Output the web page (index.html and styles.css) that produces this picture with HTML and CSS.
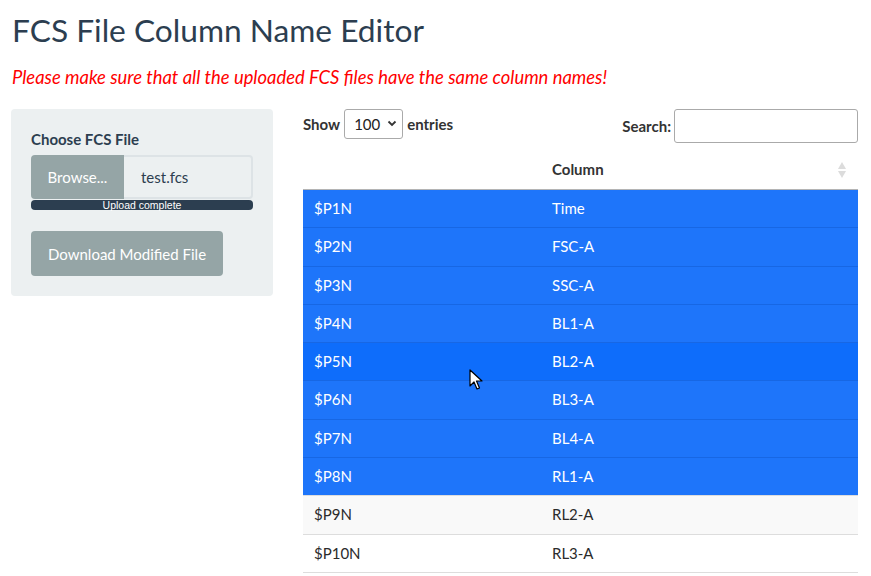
FILE: index.html
```html
<!DOCTYPE html>
<html lang="en">
<head>
<meta charset="utf-8">
<title>FCS File Column Name Editor</title>
<link rel="stylesheet" href="styles.css">
</head>
<body>
<div class="page">
  <h2 class="title">FCS File Column Name Editor</h2>
  <p class="warning">Please make sure that all the uploaded FCS files have the same column names!</p>
  <div class="layout">
    <aside class="well">
      <label class="label">Choose FCS File</label>
      <div class="file-group">
        <span class="browse">Browse...</span>
        <span class="file-name">test.fcs</span>
      </div>
      <div class="progress">Upload complete</div>
      <button class="download">Download Modified File</button>
    </aside>
    <main class="main">
      <div class="controls">
        <div class="length">Show
          <span class="select">100
            <svg class="chev" width="10" height="7" viewBox="0 0 10 7"><path d="M1.5 1.5 L5 5 L8.5 1.5" fill="none" stroke="#333" stroke-width="1.8"/></svg>
          </span>
          entries</div>
        <div class="search">Search: <span class="search-input"></span></div>
      </div>
      <table class="table">
        <thead>
          <tr>
            <th class="c1"></th>
            <th class="c2">Column
              <svg class="sort" width="10" height="18" viewBox="0 0 10 18"><path d="M5 1 L9 8 L1 8 Z" fill="#dcdcdc"/><path d="M1 10 L9 10 L5 17 Z" fill="#dcdcdc"/></svg>
            </th>
          </tr>
        </thead>
        <tbody>
          <tr class="sel"><td>$P1N</td><td>Time</td></tr>
          <tr class="sel"><td>$P2N</td><td>FSC-A</td></tr>
          <tr class="sel"><td>$P3N</td><td>SSC-A</td></tr>
          <tr class="sel"><td>$P4N</td><td>BL1-A</td></tr>
          <tr class="sel hover"><td>$P5N</td><td>BL2-A</td></tr>
          <tr class="sel"><td>$P6N</td><td>BL3-A</td></tr>
          <tr class="sel"><td>$P7N</td><td>BL4-A</td></tr>
          <tr class="sel"><td>$P8N</td><td>RL1-A</td></tr>
          <tr class="odd"><td>$P9N</td><td>RL2-A</td></tr>
          <tr class="even"><td>$P10N</td><td>RL3-A</td></tr>
        </tbody>
      </table>
    </main>
  </div>
  <svg class="cursor" width="14" height="22" viewBox="0 0 14 22"><path d="M1 1 L1 17 L5 13 L8 20 L10.5 19 L7.5 12 L13 12 Z" fill="#fff" stroke="#000" stroke-width="1.2" stroke-linejoin="round"/></svg>
</div>
</body>
</html>
```

FILE: styles.css
```css
html, body {
  margin: 0;
  padding: 0;
  overflow: hidden;
  background: #fff;
}
body {
  font-family: Lato, "Open Sans", sans-serif;
  font-size: 15px;
  line-height: 1.5;
  color: #212529;
}
.page {
  position: relative;
  padding: 0 13px 0 11px;
}
.title {
  margin: 0;
  padding-top: 11px;
  padding-left: 1px;
  font-size: 31.7px;
  font-weight: 400;
  line-height: 1.2;
  color: #2c3e50;
}
.warning {
  margin: 17px 0 0 1px;
  font-size: 18.4px;
  font-style: italic;
  color: #ff0000;
  line-height: 1.3;
}
.layout {
  display: grid;
  grid-template-columns: 262px 1fr;
  column-gap: 30px;
  align-items: start;
  margin-top: 19px;
}
.well {
  background: #ecf0f1;
  border-radius: 4px;
  padding: 19px 20px 20px;
  display: flex;
  flex-direction: column;
  align-items: flex-start;
}
.label {
  font-weight: 700;
  color: #2c3e50;
  margin-bottom: 5px;
}
.file-group {
  display: flex;
  width: 222px;
  height: 44px;
}
.browse {
  width: 93px;
  background: #95a5a6;
  color: #fff;
  border-radius: 4px 0 0 4px;
  display: flex;
  align-items: center;
  justify-content: center;
  font-size: 15px;
}
.file-name {
  flex: 1;
  border: 2px solid #dde3e6;
  border-left: none;
  border-radius: 0 4px 4px 0;
  background: #ecf0f1;
  color: #2c3e50;
  display: flex;
  align-items: center;
  padding-left: 17px;
}
.progress {
  width: 222px;
  height: 10px;
  margin-top: 1px;
  background: #2c3e50;
  border-radius: 4px;
  color: #fff;
  font-size: 10.5px;
  line-height: 10px;
  text-align: center;
  font-family: "Liberation Sans", Arial, sans-serif;
}
.download {
  margin-top: 21px;
  height: 45px;
  padding: 0 17px;
  border: none;
  border-radius: 4px;
  background: #95a5a6;
  color: #fff;
  font-family: Lato, sans-serif;
  font-size: 15px;
}
.main {
  display: flex;
  flex-direction: column;
}
.controls {
  display: flex;
  justify-content: space-between;
  align-items: flex-start;
  height: 41px;
}
.length {
  display: flex;
  align-items: center;
  gap: 3px;
  height: 30px;
  font-weight: 700;
  color: #333;
}
.select {
  display: inline-flex;
  align-items: center;
  justify-content: space-between;
  width: 59px;
  height: 30px;
  box-sizing: border-box;
  border: 1px solid #aaa;
  border-radius: 3px;
  padding: 0 5px 0 9px;
  font-weight: 400;
  color: #222;
  margin: 0 1px;
}
.search {
  display: flex;
  align-items: center;
  gap: 3px;
  height: 34px;
  font-weight: 700;
  color: #333;
}
.search-input {
  width: 184px;
  height: 34px;
  box-sizing: border-box;
  border: 1px solid #aaa;
  border-radius: 3px;
  background: #fff;
}
.table {
  width: 100%;
  border-collapse: collapse;
}
.table th {
  text-align: left;
  font-weight: 700;
  color: #333;
  padding: 7px 11px 8px;
  height: 24px;
  border-bottom: 1px solid #b4b4b4;
  position: relative;
}
.table .c1 {
  width: 216px;
}
.sort {
  position: absolute;
  right: 11px;
  top: 11px;
}
.table td {
  padding: 8px 11px 8px;
  line-height: 21.3px;
  border-top: 1px solid #dddddd;
}
.table tbody tr:first-child td {
  border-top: none;
}
.sel td {
  background: #1e75fa;
  color: #fff;
  border-top-color: #1767e4;
}
.hover td {
  background: #0e6dfb;
}
.odd td {
  background: #f9f9f9;
  color: #2b2b2b;
}
.even td {
  background: #fff;
  color: #2b2b2b;
  border-bottom: 1px solid #dddddd;
}
.sel + .odd td {
  border-top-color: #dddddd;
}
.cursor {
  position: absolute;
  left: 469px;
  top: 369px;
}
```
